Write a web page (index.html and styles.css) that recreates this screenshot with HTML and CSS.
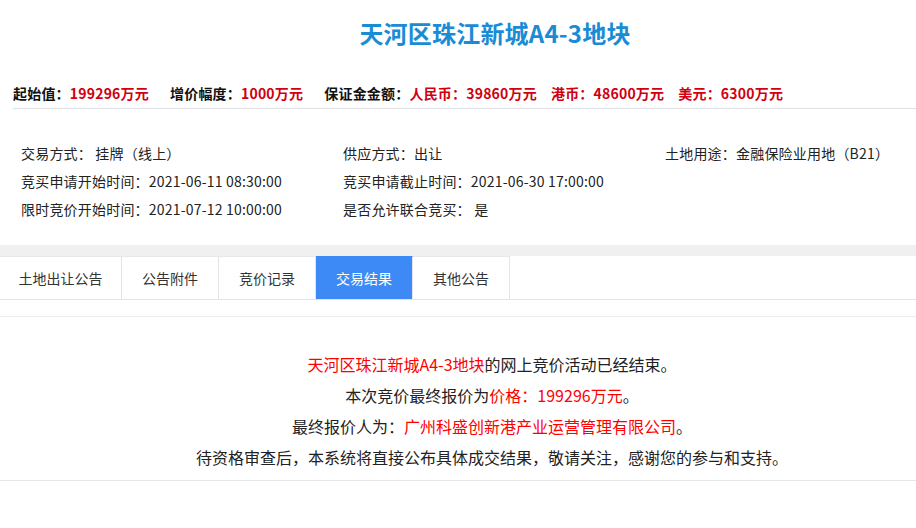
FILE: index.html
```html
<!DOCTYPE html>
<html lang="zh-CN">
<head>
<meta charset="utf-8">
<title>天河区珠江新城A4-3地块</title>
<link rel="stylesheet" href="styles.css">
</head>
<body>
<div class="page">
  <h1 class="title">天河区珠江新城A4-3地块</h1>
  <div class="stats">
    <span class="stat"><b class="lbl">起始值：</b><b class="val">199296万元</b></span>
    <span class="stat"><b class="lbl">增价幅度：</b><b class="val">1000万元</b></span>
    <span class="stat"><b class="lbl">保证金金额：</b><b class="val">人民币：39860万元</b><b class="val cur">港币：48600万元</b><b class="val cur">美元：6300万元</b></span>
  </div>
  <div class="info">
    <div class="cell">交易方式： 挂牌（线上）</div>
    <div class="cell">供应方式：出让</div>
    <div class="cell">土地用途：金融保险业用地（B21）</div>
    <div class="cell">竞买申请开始时间：2021-06-11 08:30:00</div>
    <div class="cell">竞买申请截止时间：2021-06-30 17:00:00</div>
    <div class="cell"></div>
    <div class="cell">限时竞价开始时间：2021-07-12 10:00:00</div>
    <div class="cell">是否允许联合竞买： 是</div>
    <div class="cell"></div>
  </div>
  <div class="band"></div>
  <div class="tabs">
    <div class="tab">土地出让公告</div>
    <div class="tab">公告附件</div>
    <div class="tab">竞价记录</div>
    <div class="tab active">交易结果</div>
    <div class="tab">其他公告</div>
  </div>
  <div class="result">
    <p><span class="red">天河区珠江新城A4-3地块</span>的网上竞价活动已经结束。</p>
    <p>本次竞价最终报价为<span class="red">价格：199296万元</span>。</p>
    <p>最终报价人为：<span class="red">广州科盛创新港产业运营管理有限公司</span>。</p>
    <p>待资格审查后，本系统将直接公布具体成交结果，敬请关注，感谢您的参与和支持。</p>
  </div>
</div>
</body>
</html>
```
FILE: styles.css
```css
* { box-sizing: border-box; }
html, body { margin: 0; padding: 0; background: #fff; }
body {
  font-family: "Noto Sans CJK SC", "Noto Sans", "Liberation Sans", sans-serif;
  color: #333;
}
.title {
  margin: 0;
  padding: 18px 0 0 74px;
  text-align: center;
  font-size: 24px;
  line-height: 30px;
  font-weight: bold;
  color: #1a8bd5;
  letter-spacing: 0.2px;
}
.stats {
  margin: 35px 0 0 13px;
  padding-bottom: 5px;
  border-bottom: 1px solid #dfdfe6;
  font-size: 14px;
  line-height: 20px;
  display: flex;
  gap: 21px;
  white-space: nowrap;
}
.stat b { font-weight: bold; letter-spacing: 0.2px; }
.lbl { color: #111; }
.val { color: #d0000f; }
.cur { margin-left: 14px; }
.info {
  display: grid;
  grid-template-columns: 322px 322px 1fr;
  padding: 30px 0 22px 21px;
  font-size: 14px;
  line-height: 28px;
  color: #222;
}
.cell { white-space: nowrap; letter-spacing: 0.2px; }
.band { height: 11px; background: #f0f0f0; }
.tabs {
  display: flex;
  border-bottom: 1px solid #e4e4e8;
}
.tab {
  height: 43px;
  min-width: 97px;
  padding: 0 18px;
  display: flex;
  align-items: center;
  justify-content: center;
  border-top: 1px solid #e8e8ec;
  border-right: 1px solid #e4e4e8;
  font-size: 14px;
  color: #333;
}
.tab:first-child { min-width: 122px; }
.tab.active {
  background: #3d8af7;
  color: #fff;
  border-top-color: #3d8af7;
}
.result {
  margin-top: 16px;
  border-top: 1px solid #ececec;
  border-bottom: 1px solid #e6e6e6;
  padding: 32px 0 7px 68px;
  text-align: center;
  font-size: 16px;
  line-height: 31px;
  color: #222;
}
.result p { margin: 0; }
.red { color: #f00; }
```
